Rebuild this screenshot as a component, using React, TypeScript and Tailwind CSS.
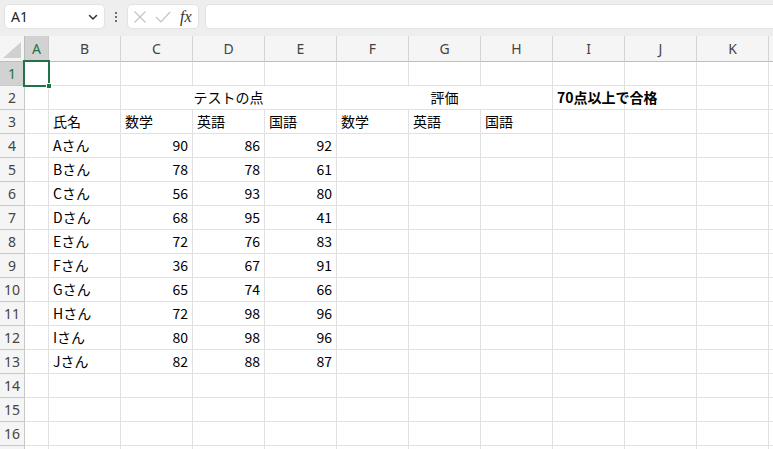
import React from "react";

const cols = ["A", "B", "C", "D", "E", "F", "G", "H", "I", "J", "K", "L"];

const scores: [string, number, number, number][] = [
  ["Aさん", 90, 86, 92],
  ["Bさん", 78, 78, 61],
  ["Cさん", 56, 93, 80],
  ["Dさん", 68, 95, 41],
  ["Eさん", 72, 76, 83],
  ["Fさん", 36, 67, 91],
  ["Gさん", 65, 74, 66],
  ["Hさん", 72, 98, 96],
  ["Iさん", 80, 98, 96],
  ["Jさん", 82, 88, 87],
];

const cell =
  "h-[24px] border-r border-b border-[#e1e1e1] px-1 flex items-center text-[14px] text-black whitespace-nowrap overflow-visible";

const RowHead = ({ n, active }: { n: number; active?: boolean }) => (
  <div
    className={
      "h-[24px] border-r border-b border-[#c8c8c8] flex items-center justify-center text-[14px] font-['Noto_Sans',sans-serif] " +
      (active ? "bg-[#d2d2d2] text-[#217346]" : "bg-[#f5f5f5] text-[#444]")
    }
  >
    {n}
  </div>
);

const Empty = ({ n }: { n: number }) => (
  <>
    {[...Array(n)].map((_, i) => (
      <div key={i} className={cell}></div>
    ))}
  </>
);

export default function App() {
  return (
    <div className="relative w-[773px] h-[449px] overflow-hidden bg-white font-['Noto_Sans_CJK_JP',sans-serif]">
      {/* formula bar */}
      <div className="h-[36px] bg-[#eeeeee] flex items-start pt-[4px] pl-[4px]">
        <div className="w-[101px] h-[25px] bg-white rounded-[5px] border border-[#e2e2e2] flex items-center pl-[6px] pr-[6px]">
          <span className="text-[14px] text-[#222] font-['Noto_Sans',sans-serif] flex-1">A1</span>
          <svg width="10" height="10" viewBox="0 0 10 10">
            <path d="M1.5 3.5 L5 7 L8.5 3.5" fill="none" stroke="#333" strokeWidth="1.5" strokeLinecap="round" strokeLinejoin="round" />
          </svg>
        </div>
        <div className="w-[22px] h-[25px] flex flex-col items-center justify-center gap-[2px]">
          <span className="w-[2px] h-[2px] bg-[#444] rounded-full"></span>
          <span className="w-[2px] h-[2px] bg-[#444] rounded-full"></span>
          <span className="w-[2px] h-[2px] bg-[#444] rounded-full"></span>
        </div>
        <div className="w-[72px] h-[25px] bg-white rounded-[5px] border border-[#e2e2e2] flex items-center pl-[5px]">
          <svg width="14" height="14" viewBox="0 0 14 14" className="mr-[8px]">
            <path d="M1.5 1.5 L12.5 12.5 M12.5 1.5 L1.5 12.5" stroke="#c4c4c4" strokeWidth="1.2" />
          </svg>
          <svg width="16" height="14" viewBox="0 0 16 14" className="mr-[9px]">
            <path d="M1 7 L6 12 L15 2" fill="none" stroke="#c4c4c4" strokeWidth="1.2" />
          </svg>
          <span className="text-[16px] italic text-[#333] font-['Liberation_Serif',serif] leading-none">fx</span>
        </div>
        <div className="ml-[6px] flex-1 h-[25px] bg-white rounded-l-[5px] border border-r-0 border-[#e2e2e2]"></div>
      </div>

      {/* sheet grid */}
      <div className="grid grid-cols-[25px_24px_repeat(11,72px)] w-[841px]">
        {/* column headers */}
        <div className="h-[26px] bg-[#f5f5f5] border-r border-b border-[#bdbdbd] relative">
          <svg width="18" height="16" viewBox="0 0 18 16" className="absolute right-[3px] bottom-[3px]">
            <polygon points="18,0 18,16 0,16" fill="#d0d0d0" />
          </svg>
        </div>
        {cols.map((c, i) => (
          <div
            key={c}
            className={
              "h-[26px] border-r border-b flex items-center justify-center text-[14px] font-['Noto_Sans',sans-serif] " +
              (i === 0
                ? "bg-[#d2d2d2] text-[#217346] border-r-[#c8c8c8] border-b-[#217346]"
                : "bg-[#f5f5f5] text-[#444] border-r-[#d4d4d4] border-b-[#bdbdbd]")
            }
          >
            {c}
          </div>
        ))}

        {/* row 1 */}
        <RowHead n={1} active />
        <Empty n={12} />

        {/* row 2 */}
        <RowHead n={2} />
        <Empty n={2} />
        <div className={cell + " col-span-3 justify-center"}>テストの点</div>
        <div className={cell + " col-span-3 justify-center"}>評価</div>
        <div className={cell + " font-bold"}>70点以上で合格</div>
        <Empty n={3} />

        {/* row 3 */}
        <RowHead n={3} />
        <div className={cell}></div>
        <div className={cell}>氏名</div>
        <div className={cell}>数学</div>
        <div className={cell}>英語</div>
        <div className={cell}>国語</div>
        <div className={cell}>数学</div>
        <div className={cell}>英語</div>
        <div className={cell}>国語</div>
        <Empty n={4} />

        {scores.map(([name, m, e, j], i) => (
          <React.Fragment key={name}>
            <RowHead n={i + 4} />
            <div className={cell}></div>
            <div className={cell}>{name}</div>
            <div className={cell + " justify-end"}>{m}</div>
            <div className={cell + " justify-end"}>{e}</div>
            <div className={cell + " justify-end"}>{j}</div>
            <Empty n={7} />
          </React.Fragment>
        ))}

        {[14, 15, 16, 17].map((n) => (
          <React.Fragment key={n}>
            <RowHead n={n} />
            <Empty n={12} />
          </React.Fragment>
        ))}
      </div>

      {/* active cell selection */}
      <div className="absolute left-[23px] top-[60px] w-[27px] h-[27px] border-2 border-[#217346]"></div>
      <div className="absolute left-[46px] top-[83px] w-[6px] h-[6px] bg-[#217346] border border-white"></div>
    </div>
  );
}
